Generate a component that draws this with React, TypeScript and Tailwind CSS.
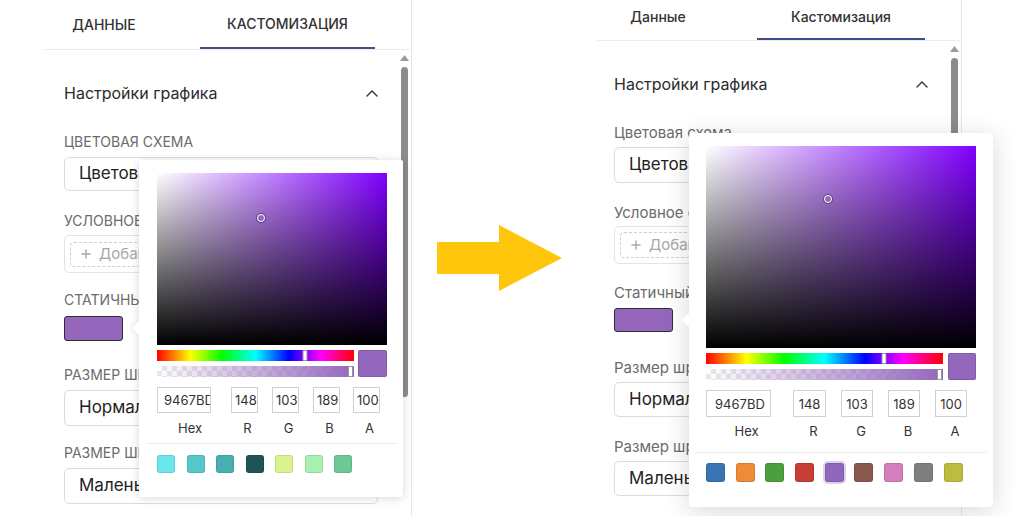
import { Plus } from "lucide-react"

const leftSwatches = ["#6ce6ec", "#55c6ca", "#4aafb2", "#1f5454", "#d9f38f", "#aaf0b2", "#6dc994"]
const rightSwatches = ["#3a74b2", "#ef8a36", "#4c9f3f", "#c93d37", "#9067bb", "#88584e", "#d67dbd", "#7f7f7f", "#bdbc40"]

function Chevron() {
  return (
    <svg width="12" height="8" viewBox="0 0 12 8" className="shrink-0">
      <polyline points="1,7 6,2 11,7" fill="none" stroke="#333" strokeWidth="1.4" strokeLinecap="round" strokeLinejoin="round" />
    </svg>
  )
}

function ScrollUp() {
  return (
    <svg width="9" height="6" viewBox="0 0 9 6">
      <polygon points="4.5,0 9,6 0,6" fill="#9a9a9a" />
    </svg>
  )
}

function SatArea({ className }: { className: string }) {
  return (
    <div className={`relative bg-[#8000ff] ${className}`}>
      <div className="absolute inset-0 bg-gradient-to-r from-white to-white/0" />
      <div className="absolute inset-0 bg-gradient-to-t from-black to-black/0" />
      <div className="absolute left-[45%] top-[26%] h-[8px] w-[8px] -translate-x-1/2 -translate-y-1/2 rounded-full border-[1.5px] border-white shadow-[0_0_0_1px_rgba(0,0,0,0.35)]" />
    </div>
  )
}

function Sliders({ className }: { className: string }) {
  return (
    <div className={`flex flex-col gap-[5px] ${className}`}>
      <div className="relative h-[11px] bg-[linear-gradient(to_right,#f00_0%,#ff0_17%,#0f0_33%,#0ff_50%,#00f_67%,#f0f_83%,#f00_100%)]">
        <div className="absolute left-[75%] top-0 h-full w-[5px] -translate-x-1/2 rounded-[1px] border border-[#999] bg-white" />
      </div>
      <div className="relative h-[11px] bg-[repeating-conic-gradient(#e8e8e8_0%_25%,#ffffff_0%_50%)] bg-size-[10px_10px]">
        <div className="absolute inset-0 bg-gradient-to-r from-[#9467bd]/0 to-[#9467bd]" />
        <div className="absolute right-[1px] top-0 h-full w-[5px] rounded-[1px] border border-[#999] bg-white" />
      </div>
    </div>
  )
}

function LeftPopup() {
  return (
    <div className="absolute left-[95px] top-[160px] h-[337px] w-[264px] rounded-[2px] bg-white pl-[18px] pr-[16px] pt-[13px] shadow-[0_1px_10px_rgba(0,0,0,0.16)]">
      <div className="absolute left-[-5px] top-[163px] h-[10px] w-[10px] rotate-45 bg-white shadow-[-2px_2px_3px_rgba(0,0,0,0.06)]" />
      <SatArea className="h-[172px] w-full" />
      <div className="mt-[5px] flex gap-[4px]">
        <Sliders className="w-[197px]" />
        <div className="h-[27px] w-[29px] rounded-[2px] bg-[#9467bd] shadow-[inset_0_0_0_1px_rgba(0,0,0,0.12)]" />
      </div>
      <div className="mt-[10px] flex text-[13px] text-[#333]">
        <div className="flex w-[54px] flex-col">
          <input readOnly value="9467BD" className="h-[26px] w-full border border-[#d0d0d0] pl-[6px] text-[13px] text-[#333] outline-none" />
          <div className="mt-[7px] pl-[12px] text-center leading-[16px]">Hex</div>
        </div>
        {[["148", "R", "ml-[20px]"], ["103", "G", "ml-[14px]"], ["189", "B", "ml-[14px]"], ["100", "A", "ml-[13px]"]].map(([v, l, m]) => (
          <div key={l} className={`flex w-[27px] flex-col ${m}`}>
            <input readOnly value={v} className="h-[26px] w-full border border-[#d0d0d0] pl-[3px] text-[13px] text-[#333] outline-none" />
            <div className="mt-[7px] pl-[6px] text-center leading-[16px]">{l}</div>
          </div>
        ))}
      </div>
      <div className="-ml-[11px] -mr-[10px] mt-[7px] h-px bg-[#ececec]" />
      <div className="mt-[11px] flex gap-[11.5px]">
        {leftSwatches.map((c) => (
          <div key={c} className="h-[18px] w-[18px] rounded-[3px] shadow-[inset_0_0_0_1px_rgba(0,0,0,0.1)]" style={{ backgroundColor: c }} />
        ))}
      </div>
    </div>
  )
}

function RightPopup() {
  return (
    <div className="absolute left-[92px] top-[133px] h-[374px] w-[304px] rounded-[4px] bg-white pl-[17px] pr-[17px] pt-[13px] shadow-[0_4px_26px_rgba(0,0,0,0.16)]">
      <div className="absolute left-[-5px] top-[182px] h-[10px] w-[10px] rotate-45 bg-white" />
      <SatArea className="h-[202px] w-full" />
      <div className="mt-[5px] flex gap-[5px]">
        <Sliders className="w-[237px]" />
        <div className="h-[27px] w-[28px] rounded-[2px] bg-[#9467bd] shadow-[inset_0_0_0_1px_rgba(0,0,0,0.12)]" />
      </div>
      <div className="mt-[10px] flex text-[13px] text-[#333]">
        <div className="flex w-[65px] flex-col">
          <input readOnly value="9467BD" className="h-[27px] w-full border border-[#d0d0d0] pl-[8px] text-[13px] text-[#333] outline-none" />
          <div className="mt-[6px] pl-[16px] text-center leading-[16px]">Hex</div>
        </div>
        {[["148", "R", "ml-[22px] w-[33px]"], ["103", "G", "ml-[15px] w-[32px]"], ["189", "B", "ml-[15px] w-[32px]"], ["100", "A", "ml-[15px] w-[32px]"]].map(([v, l, m]) => (
          <div key={l} className={`flex flex-col ${m}`}>
            <input readOnly value={v} className="h-[27px] w-full border border-[#d0d0d0] text-center text-[13px] text-[#333] outline-none" />
            <div className="mt-[6px] pl-[8px] text-center leading-[16px]">{l}</div>
          </div>
        ))}
      </div>
      <div className="-mx-[11px] mt-[13px] h-px bg-[#ececec]" />
      <div className="mt-[10px] flex gap-[10.7px]">
        {rightSwatches.map((c) => (
          <div key={c} className={`h-[19px] w-[19px] rounded-[3px] shadow-[inset_0_0_0_1px_rgba(0,0,0,0.1)] ${c === "#9067bb" ? "ring-2 ring-[#9467bd]/30" : ""}`} style={{ backgroundColor: c }} />
        ))}
      </div>
    </div>
  )
}

function LeftPanel() {
  return (
    <div className="relative h-[516px] w-[368px] shrink-0 border-r border-[#e6e6e6] bg-white">
      <div className="flex h-[50px] border-b border-[#ececec] text-[14px] font-medium text-[#333]">
        <div className="flex w-[120px] items-center justify-center">ДАННЫЕ</div>
        <div className="ml-[36px] flex w-[175px] items-center justify-center border-b-2 border-[#414c8a]">КАСТОМИЗАЦИЯ</div>
      </div>
      <div className="flex">
        <div className="flex w-[334px] flex-col pl-[20px]">
          <div className="mt-[33px] flex h-[20px] items-center justify-between">
            <span className="text-[16px] leading-[20px] text-[#2b2b2b]">Настройки графика</span>
            <Chevron />
          </div>
          <div className="mt-[30px] text-[14px] leading-[18px] text-[#6b6b6b]">ЦВЕТОВАЯ СХЕМА</div>
          <div className="mt-[6px] flex h-[34px] items-center rounded-[5px] border border-[#dcdcdc] pl-[14px] text-[17px] text-[#222]">Цветовая схема 1</div>
          <div className="mt-[21px] text-[14px] leading-[18px] text-[#6b6b6b]">УСЛОВНОЕ ФОРМАТИРОВАНИЕ</div>
          <div className="mt-[5px] flex h-[38px] items-center rounded-[5px] border border-[#e4e4e4] px-[5px]">
            <div className="flex h-[25px] w-full items-center gap-[6px] rounded-[4px] border border-dashed border-[#cfcfcf] pl-[8px] text-[15px] text-[#a8a8a8]">
              <Plus size={14} strokeWidth={2.5} className="text-[#a8a8a8]" />
              Добавить условие
            </div>
          </div>
          <div className="mt-[18px] text-[14px] leading-[18px] text-[#6b6b6b]">СТАТИЧНЫЙ ЦВЕТ</div>
          <div className="mt-[7px] h-[25px] w-[59px] rounded-[3px] border-[1.5px] border-[#2e2e2e] bg-[#9467bd]" />
          <div className="mt-[25px] text-[14px] leading-[18px] text-[#6b6b6b]">РАЗМЕР ШРИФТА</div>
          <div className="mt-[6px] flex h-[36px] items-center rounded-[5px] border border-[#dcdcdc] pl-[14px] text-[17px] text-[#222]">Нормальный</div>
          <div className="mt-[18px] text-[14px] leading-[18px] text-[#6b6b6b]">РАЗМЕР ШРИФТА ЛЕГЕНДЫ</div>
          <div className="mt-[6px] flex h-[36px] items-center rounded-[5px] border border-[#dcdcdc] pl-[14px] text-[17px] text-[#222]">Маленький</div>
        </div>
        <div className="ml-[22px] flex w-[9px] flex-col items-center pt-[5px]">
          <ScrollUp />
          <div className="mt-[6px] h-[330px] w-[7px] rounded-full bg-[#8c8c8c]" />
        </div>
      </div>
      <LeftPopup />
    </div>
  )
}

function RightPanel() {
  return (
    <div className="relative h-[516px] w-[365px] shrink-0 border-r border-[#e6e6e6] bg-white">
      <div className="flex h-[41px] border-b border-[#ececec] text-[14px] font-medium text-[#333]">
        <div className="flex w-[122px] justify-center pt-[8px] leading-[18px]">Данные</div>
        <div className="ml-[38px] flex w-[168px] justify-center border-b-2 border-[#414c8a] pt-[8px] leading-[18px]">Кастомизация</div>
      </div>
      <div className="flex">
        <div className="flex w-[331px] flex-col pl-[17px]">
          <div className="mt-[33px] flex h-[20px] items-center justify-between">
            <span className="text-[16px] leading-[20px] text-[#2b2b2b]">Настройки графика</span>
            <Chevron />
          </div>
          <div className="mt-[30px] text-[15px] leading-[18px] text-[#6b6b6b]">Цветовая схема</div>
          <div className="mt-[5px] flex h-[36px] items-center rounded-[5px] border border-[#dcdcdc] pl-[14px] text-[17px] text-[#222]">Цветовая схема 1</div>
          <div className="mt-[21px] text-[15px] leading-[18px] text-[#6b6b6b]">Условное форматирование</div>
          <div className="mt-[4px] flex h-[38px] items-center rounded-[5px] border border-[#e4e4e4] px-[5px]">
            <div className="flex h-[26px] w-full items-center gap-[6px] rounded-[4px] border border-dashed border-[#cfcfcf] pl-[8px] text-[15px] text-[#a8a8a8]">
              <Plus size={14} strokeWidth={2.5} className="text-[#a8a8a8]" />
              Добавить условие
            </div>
          </div>
          <div className="mt-[20px] text-[15px] leading-[18px] text-[#6b6b6b]">Статичный цвет</div>
          <div className="mt-[6px] h-[24px] w-[59px] rounded-[3px] border-[1.5px] border-[#2e2e2e] bg-[#9467bd]" />
          <div className="mt-[27px] text-[15px] leading-[18px] text-[#6b6b6b]">Размер шрифта</div>
          <div className="mt-[5px] flex h-[35px] items-center rounded-[5px] border border-[#dcdcdc] pl-[14px] text-[17px] text-[#222]">Нормальный</div>
          <div className="mt-[21px] text-[15px] leading-[18px] text-[#6b6b6b]">Размер шрифта легенды</div>
          <div className="mt-[5px] flex h-[35px] items-center rounded-[5px] border border-[#dcdcdc] pl-[14px] text-[17px] text-[#222]">Маленький</div>
        </div>
        <div className="ml-[22px] flex w-[9px] flex-col items-center pt-[5px]">
          <ScrollUp />
          <div className="mt-[6px] h-[330px] w-[7px] rounded-full bg-[#8c8c8c]" />
        </div>
      </div>
      <RightPopup />
    </div>
  )
}

export default function App() {
  return (
    <div className="flex h-[516px] w-[1024px] overflow-hidden bg-white font-['Inter',sans-serif]">
      <div className="w-[44px] shrink-0" />
      <LeftPanel />
      <div className="flex w-[185px] shrink-0 items-center pl-[25px]">
        <svg width="126" height="66" viewBox="0 0 126 66">
          <polygon points="0,17 62,17 62,0 125,33 62,66 62,49 0,49" fill="#ffc70b" />
        </svg>
      </div>
      <RightPanel />
    </div>
  )
}
